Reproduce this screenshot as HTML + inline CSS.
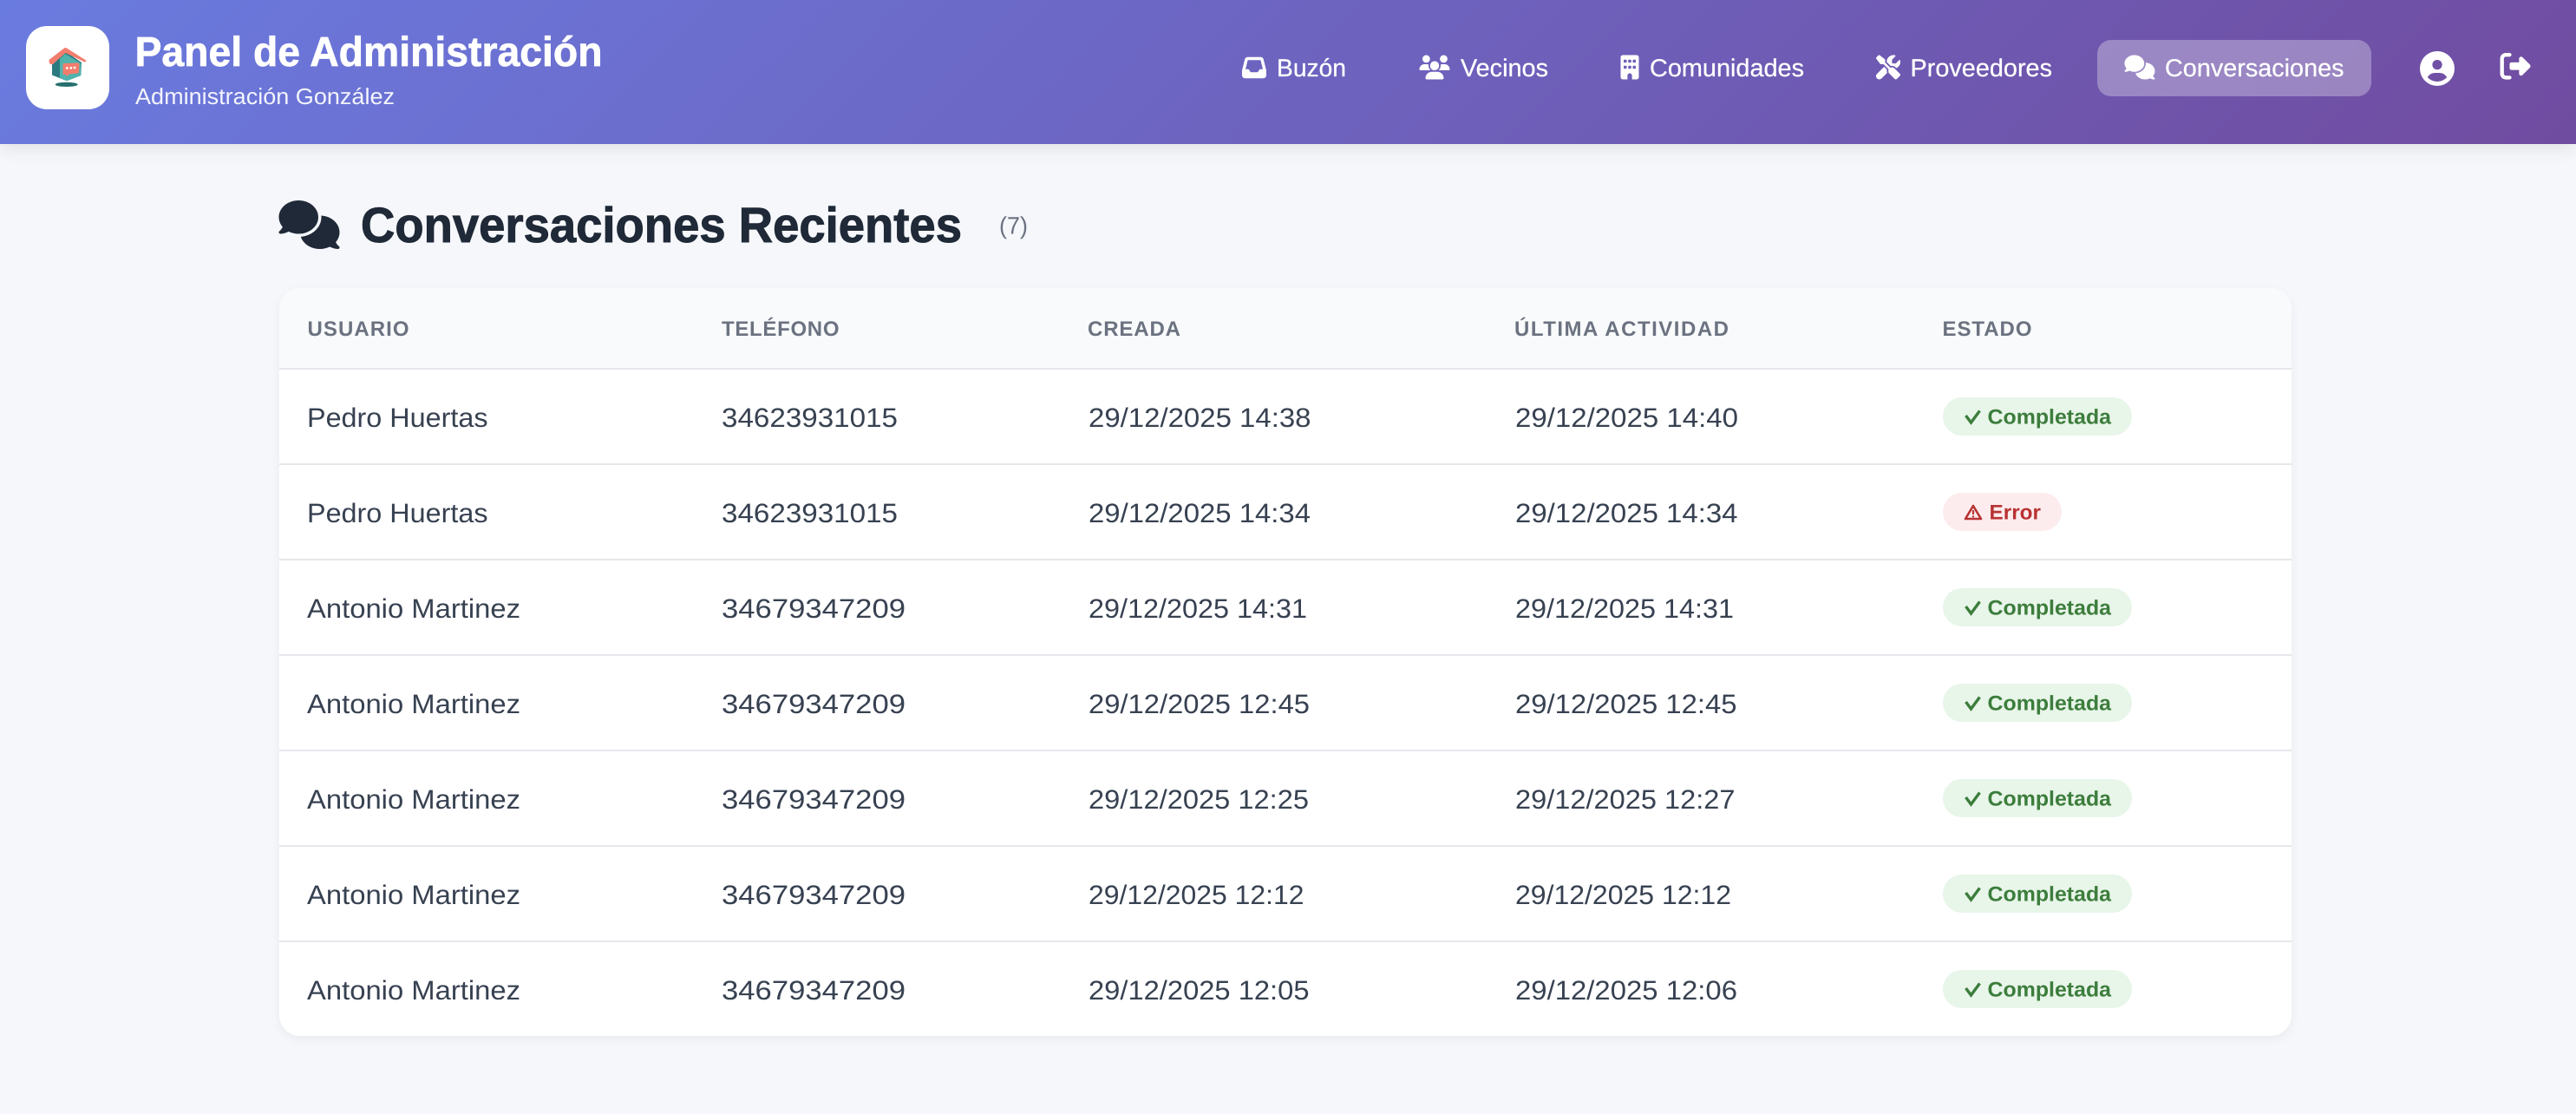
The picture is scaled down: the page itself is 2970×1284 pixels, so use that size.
<!DOCTYPE html>
<html lang="es">
<head>
<meta charset="utf-8">
<title>Panel de Administración</title>
<style>
html,body{margin:0;padding:0;width:2970px;height:1284px;overflow:hidden;background:#f5f7fb;}
#hdr{position:absolute;left:0;top:0;width:2970px;height:166px;background:linear-gradient(135deg,#6a7bdf 0%,#704ca0 100%);box-shadow:0 4px 20px rgba(0,0,0,.1);}
#logo{position:absolute;left:30px;top:30px;width:96px;height:96px;background:#fff;border-radius:24px;}
#pill{position:absolute;left:2418px;top:46px;width:316px;height:65px;border-radius:16px;background:rgba(255,255,255,.3);}
#card{position:absolute;left:322px;top:332px;width:2320px;height:862px;background:#fff;border-radius:24px;box-shadow:0 4px 12px rgba(0,0,0,.05);overflow:hidden;}
#thead{position:absolute;left:0;top:0;width:100%;height:92px;background:#f9fafb;border-bottom:2px solid #e5e7eb;}
.rl{position:absolute;left:0;width:100%;height:2px;background:#e5e7eb;}
svg#o{position:absolute;left:0;top:0;}
text{font-family:"Liberation Sans",Arial,sans-serif;text-rendering:geometricPrecision;}
.n{font-size:28.5px;fill:#fff;stroke:#fff;stroke-width:.25px;}
.h{font-size:24px;font-weight:700;fill:#6b7280;}
.c{font-size:31px;fill:#374151;}
.b{font-size:24px;font-weight:700;}
.g{fill:#3c7d3c;}
.r{fill:#b83232;}
</style>
</head>
<body>
<div id="hdr"><div id="logo"></div><div id="pill"></div></div>
<div id="card">
<div id="thead"></div>
<div class="rl" style="top:202px"></div>
<div class="rl" style="top:312px"></div>
<div class="rl" style="top:422px"></div>
<div class="rl" style="top:532px"></div>
<div class="rl" style="top:642px"></div>
<div class="rl" style="top:752px"></div>
</div>
<svg id="o" width="2970" height="1284" viewBox="0 0 2970 1284" xmlns="http://www.w3.org/2000/svg">
<defs>
<path id="comments" d="M208 352c114.9 0 208-78.8 208-176S322.9 0 208 0S0 78.8 0 176c0 38.6 14.7 74.3 39.6 103.4c-3.5 9.4-8.7 17.7-14.2 24.7c-4.8 6.2-9.7 11-13.3 14.3c-1.8 1.6-3.3 2.9-4.3 3.7c-.5 .4-.9 .7-1.1 .8l-.2 .2 0 0 0 0C1 327.2-1.4 334.4 .8 340.9S9.1 352 16 352c21.8 0 43.8-5.6 62.1-12.5c9.2-3.5 17.8-7.4 25.3-11.4C134.1 343.3 169.8 352 208 352zM448 176c0 112.3-99.1 196.9-216.5 207C255.8 457.4 336.4 512 432 512c38.2 0 73.9-8.7 104.7-23.9c7.5 4 16 7.9 25.2 11.4c18.3 6.9 40.3 12.5 62.1 12.5c6.9 0 13.1-4.5 15.2-11.1c2.1-6.6-.2-13.8-5.8-17.9l0 0 0 0-.2-.2c-.2-.2-.6-.4-1.1-.8c-1-.8-2.5-2-4.3-3.7c-3.6-3.3-8.5-8.1-13.3-14.3c-5.5-7-10.7-15.4-14.2-24.7c24.9-29 39.6-64.7 39.6-103.4c0-92.8-84.9-168.9-192.6-175.5c.4 5.1 .6 10.3 .6 15.5z"/>
<g id="ok"><rect width="218" height="44" rx="22" fill="#e8f5e9"/><path d="M26.500 21 L32.500 29 L42.500 15.500" fill="none" stroke="#3c7d3c" stroke-width="3.400"/></g>
</defs>

<!-- logo -->
<ellipse cx="76.700" cy="97.400" rx="13" ry="2.600" fill="#25706f"/>
<path d="M60 72 L75 59 L94 72 L93.300 87 L77 93.300 L60 86.500 Z" fill="#2c7a80"/>
<path d="M69 90 L69 68 L75 62 L93.300 73 L93.300 87 L77 93.300 Z" fill="#4fb3ac"/>
<path d="M56.500 69 L74 55.500 Q75.500 54.500 77 55.500 L99 69.500 Q100 71 97.500 71.500 L75.500 61 L61 74 Q56 75 56.500 69 Z" fill="#f27d6d"/>
<path d="M74 73 L90 72.500 Q91.500 72.500 91.500 74 L91 83 Q91 84.500 89.500 84.500 L80 85.500 L76.800 88 L76 86 L74 86 Q72.500 86 72.500 84.500 L72.500 74.500 Q72.500 73 74 73 Z" fill="#f27d6d"/>
<circle cx="77.300" cy="78.500" r="1.400" fill="#fff"/><circle cx="81.800" cy="78.300" r="1.400" fill="#fff"/><circle cx="86" cy="78" r="1.400" fill="#fff"/>

<!-- brand -->
<text x="155.500" y="76" font-size="48" font-weight="700" fill="#fff" stroke="#fff" stroke-width=".7" textLength="539" lengthAdjust="spacingAndGlyphs">Panel de Administración</text>
<text x="156" y="120" font-size="26" fill="#fff" fill-opacity=".92" textLength="299" lengthAdjust="spacingAndGlyphs">Administración González</text>

<!-- nav -->
<svg x="1432" y="64" width="28" height="28" viewBox="0 0 512 512" fill="#fff"><path d="M121 32C91.600 32 66 52 58.900 80.500L1.900 308.400C.6 313.500 0 318.700 0 323.900V416c0 35.300 28.700 64 64 64H448c35.300 0 64-28.700 64-64V323.900c0-5.200-.6-10.400-1.900-15.500l-57-227.900C446 52 420.400 32 391 32H121zm0 64H391l48 192H387.800c-12.100 0-23.200 6.800-28.600 17.700l-14.300 28.600c-5.400 10.800-16.500 17.700-28.600 17.700H195.800c-12.100 0-23.200-6.800-28.600-17.700l-14.300-28.600c-5.400-10.800-16.500-17.700-28.600-17.700H73L121 96z"/></svg>
<text class="n" x="1472" y="88" textLength="80" lengthAdjust="spacingAndGlyphs">Buzón</text>

<svg x="1636.500" y="63.500" width="35" height="28" viewBox="0 0 640 512" fill="#fff"><path d="M144 0a80 80 0 1 1 0 160A80 80 0 1 1 144 0zM512 0a80 80 0 1 1 0 160A80 80 0 1 1 512 0zM0 298.700C0 239.800 47.800 192 106.700 192h42.700c15.900 0 31 3.500 44.600 9.700c-1.300 7.200-1.900 14.700-1.900 22.300c0 38.200 16.800 72.500 43.300 96c-.2 0-.4 0-.7 0H21.300C9.600 320 0 310.400 0 298.700zM405.300 320c-.2 0-.4 0-.7 0c26.600-23.500 43.300-57.800 43.300-96c0-7.600-.7-15-1.900-22.300c13.600-6.300 28.700-9.700 44.600-9.700h42.700C592.200 192 640 239.800 640 298.700c0 11.800-9.600 21.300-21.300 21.300H405.300zM224 224a96 96 0 1 1 192 0 96 96 0 1 1 -192 0zM128 485.300C128 411.700 187.700 352 261.300 352H378.700C452.300 352 512 411.700 512 485.300c0 14.700-11.900 26.700-26.700 26.700H154.700c-14.700 0-26.700-11.900-26.700-26.700z"/></svg>
<text class="n" x="1684" y="88" textLength="101" lengthAdjust="spacingAndGlyphs">Vecinos</text>

<svg x="1868.500" y="63.500" width="21" height="28" viewBox="0 0 384 512" fill="#fff"><path d="M48 0C21.500 0 0 21.500 0 48V464c0 26.500 21.500 48 48 48h96V432c0-26.500 21.500-48 48-48s48 21.500 48 48v80h96c26.500 0 48-21.500 48-48V48c0-26.500-21.500-48-48-48H48zM64 240c0-8.800 7.200-16 16-16h32c8.800 0 16 7.200 16 16v32c0 8.800-7.200 16-16 16H80c-8.800 0-16-7.200-16-16V240zm112-16h32c8.800 0 16 7.200 16 16v32c0 8.800-7.200 16-16 16H176c-8.800 0-16-7.200-16-16V240c0-8.800 7.200-16 16-16zm80 16c0-8.800 7.200-16 16-16h32c8.800 0 16 7.200 16 16v32c0 8.800-7.200 16-16 16H272c-8.800 0-16-7.200-16-16V240zM80 96h32c8.800 0 16 7.200 16 16v32c0 8.800-7.200 16-16 16H80c-8.800 0-16-7.200-16-16V112c0-8.800 7.200-16 16-16zm80 16c0-8.800 7.200-16 16-16h32c8.800 0 16 7.200 16 16v32c0 8.800-7.200 16-16 16H176c-8.800 0-16-7.200-16-16V112zM272 96h32c8.800 0 16 7.200 16 16v32c0 8.800-7.200 16-16 16H272c-8.800 0-16-7.200-16-16V112c0-8.800 7.200-16 16-16z"/></svg>
<text class="n" x="1902" y="88" textLength="178" lengthAdjust="spacingAndGlyphs">Comunidades</text>

<svg x="2163" y="63.500" width="28" height="28" viewBox="0 0 512 512" fill="#fff"><path d="M78.600 5C69.100-2.400 55.600-1.500 47 7L7 47c-8.500 8.500-9.400 22-2.100 31.600l80 104c4.500 5.900 11.600 9.400 19 9.400h54.100l109 109c-14.700 29-10 65.400 14.300 89.600l112 112c12.500 12.500 32.800 12.500 45.300 0l64-64c12.500-12.500 12.500-32.800 0-45.300l-112-112c-24.200-24.200-60.600-29-89.600-14.300l-109-109V104c0-7.500-3.500-14.500-9.400-19L78.600 5zM19.900 396.100C7.200 408.800 0 426.100 0 444.100C0 481.600 30.400 512 67.900 512c18 0 35.300-7.200 48-19.900L233.700 374.300c-7.800-20.900-9-43.600-3.600-65.100l-61.700-61.700L19.900 396.100zM512 144c0-10.500-1.100-20.700-3.200-30.500c-2.400-11.200-16.100-14.100-24.200-6l-63.900 63.900c-3 3-7.100 4.700-11.300 4.700H352c-8.800 0-16-7.200-16-16V102.600c0-4.200 1.700-8.300 4.700-11.300l63.900-63.900c8.100-8.100 5.200-21.800-6-24.200C388.700 1.100 378.500 0 368 0C288.500 0 224 64.500 224 144l0 .8 85.300 85.300c36-9.100 75.800 .5 104 28.700L429 274.500c49-23 83-72.800 83-130.500z"/></svg>
<text class="n" x="2202.500" y="88" textLength="163.500" lengthAdjust="spacingAndGlyphs">Proveedores</text>

<svg x="2449.500" y="63.500" width="35" height="28" viewBox="0 0 640 512" fill="#fff"><use href="#comments"/></svg>
<text class="n" x="2496" y="88" textLength="206.500" lengthAdjust="spacingAndGlyphs">Conversaciones</text>

<svg x="2790" y="59" width="40" height="40" viewBox="0 0 512 512" fill="#fff"><path d="M399 384.200C376.900 345.800 335.400 320 288 320H224c-47.400 0-88.900 25.800-111 64.200c35.200 39.200 86.200 63.800 143 63.800s107.800-24.700 143-63.800zM0 256a256 256 0 1 1 512 0A256 256 0 1 1 0 256zm256 16a72 72 0 1 0 0-144 72 72 0 1 0 0 144z"/></svg>
<svg x="2882.500" y="58.800" width="35" height="35" viewBox="0 0 512 512" fill="#fff"><path d="M377.900 105.900L500.700 228.700c7.200 7.200 11.300 17.100 11.300 27.300s-4.100 20.100-11.300 27.300L377.900 406.100c-6.400 6.400-15 9.900-24 9.900c-18.700 0-33.900-15.200-33.900-33.900l0-62.100-128 0c-17.700 0-32-14.300-32-32l0-64c0-17.700 14.300-32 32-32l128 0 0-62.100c0-18.700 15.200-33.900 33.900-33.900c9 0 17.600 3.600 24 9.900zM160 96L96 96c-17.700 0-32 14.300-32 32l0 256c0 17.700 14.300 32 32 32l64 0c17.700 0 32 14.300 32 32s-14.300 32-32 32l-64 0c-53 0-96-43-96-96L0 128C0 75 43 32 96 32l64 0c17.700 0 32 14.300 32 32s-14.300 32-32 32z"/></svg>

<!-- heading -->
<svg x="321.500" y="231" width="70" height="56" viewBox="0 0 640 512" fill="#1f2937"><use href="#comments"/></svg>
<text x="416" y="279" font-size="57" font-weight="700" fill="#1f2937" stroke="#1f2937" stroke-width="1" textLength="693" lengthAdjust="spacingAndGlyphs">Conversaciones Recientes</text>
<text x="1152" y="269.500" font-size="28" fill="#6b7280" textLength="33" lengthAdjust="spacingAndGlyphs">(7)</text>

<!-- table head -->
<text class="h" x="354.500" y="387" textLength="117" lengthAdjust="spacing">USUARIO</text>
<text class="h" x="832" y="387" textLength="135.500" lengthAdjust="spacing">TELÉFONO</text>
<text class="h" x="1254" y="387" textLength="107" lengthAdjust="spacing">CREADA</text>
<text class="h" x="1746" y="387" textLength="247" lengthAdjust="spacing">ÚLTIMA ACTIVIDAD</text>
<text class="h" x="2239.500" y="387" textLength="103" lengthAdjust="spacing">ESTADO</text>

<!-- row 1 -->
<text class="c" x="354" y="492" textLength="208.500" lengthAdjust="spacingAndGlyphs">Pedro Huertas</text>
<text class="c" x="832" y="492" textLength="203" lengthAdjust="spacingAndGlyphs">34623931015</text>
<text class="c" x="1255" y="492" textLength="256.500" lengthAdjust="spacingAndGlyphs">29/12/2025 14:38</text>
<text class="c" x="1747" y="492" textLength="257" lengthAdjust="spacingAndGlyphs">29/12/2025 14:40</text>
<use href="#ok" x="2240" y="458"/>
<text class="b g" x="2291.500" y="488.500" textLength="142.500" lengthAdjust="spacingAndGlyphs">Completada</text>

<!-- row 2 -->
<text class="c" x="354" y="602" textLength="208.500" lengthAdjust="spacingAndGlyphs">Pedro Huertas</text>
<text class="c" x="832" y="602" textLength="203" lengthAdjust="spacingAndGlyphs">34623931015</text>
<text class="c" x="1255" y="602" textLength="256" lengthAdjust="spacingAndGlyphs">29/12/2025 14:34</text>
<text class="c" x="1747" y="602" textLength="256.500" lengthAdjust="spacingAndGlyphs">29/12/2025 14:34</text>
<rect x="2240" y="568" width="137" height="44" rx="22" fill="#fdecee"/>
<path d="M2275 583 L2284 598 L2266 598 Z" fill="none" stroke="#b83232" stroke-width="2.600" stroke-linejoin="round"/>
<path d="M2275 588 V593" stroke="#b83232" stroke-width="2.200"/><circle cx="2275" cy="595.300" r="1.200" fill="#b83232"/>
<text class="b r" x="2293.500" y="598.500" textLength="59.500" lengthAdjust="spacingAndGlyphs">Error</text>

<!-- row 3 -->
<text class="c" x="354" y="712" textLength="246" lengthAdjust="spacingAndGlyphs">Antonio Martinez</text>
<text class="c" x="832" y="712" textLength="212" lengthAdjust="spacingAndGlyphs">34679347209</text>
<text class="c" x="1255" y="712" textLength="252" lengthAdjust="spacingAndGlyphs">29/12/2025 14:31</text>
<text class="c" x="1747" y="712" textLength="252" lengthAdjust="spacingAndGlyphs">29/12/2025 14:31</text>
<use href="#ok" x="2240" y="678"/>
<text class="b g" x="2291.500" y="708.500" textLength="142.500" lengthAdjust="spacingAndGlyphs">Completada</text>

<!-- row 4 -->
<text class="c" x="354" y="822" textLength="246" lengthAdjust="spacingAndGlyphs">Antonio Martinez</text>
<text class="c" x="832" y="822" textLength="212" lengthAdjust="spacingAndGlyphs">34679347209</text>
<text class="c" x="1255" y="822" textLength="255" lengthAdjust="spacingAndGlyphs">29/12/2025 12:45</text>
<text class="c" x="1747" y="822" textLength="255.500" lengthAdjust="spacingAndGlyphs">29/12/2025 12:45</text>
<use href="#ok" x="2240" y="788"/>
<text class="b g" x="2291.500" y="818.500" textLength="142.500" lengthAdjust="spacingAndGlyphs">Completada</text>

<!-- row 5 -->
<text class="c" x="354" y="932" textLength="246" lengthAdjust="spacingAndGlyphs">Antonio Martinez</text>
<text class="c" x="832" y="932" textLength="212" lengthAdjust="spacingAndGlyphs">34679347209</text>
<text class="c" x="1255" y="932" textLength="254" lengthAdjust="spacingAndGlyphs">29/12/2025 12:25</text>
<text class="c" x="1747" y="932" textLength="253.500" lengthAdjust="spacingAndGlyphs">29/12/2025 12:27</text>
<use href="#ok" x="2240" y="898"/>
<text class="b g" x="2291.500" y="928.500" textLength="142.500" lengthAdjust="spacingAndGlyphs">Completada</text>

<!-- row 6 -->
<text class="c" x="354" y="1042" textLength="246" lengthAdjust="spacingAndGlyphs">Antonio Martinez</text>
<text class="c" x="832" y="1042" textLength="212" lengthAdjust="spacingAndGlyphs">34679347209</text>
<text class="c" x="1255" y="1042" textLength="248.500" lengthAdjust="spacingAndGlyphs">29/12/2025 12:12</text>
<text class="c" x="1747" y="1042" textLength="249" lengthAdjust="spacingAndGlyphs">29/12/2025 12:12</text>
<use href="#ok" x="2240" y="1008"/>
<text class="b g" x="2291.500" y="1038.500" textLength="142.500" lengthAdjust="spacingAndGlyphs">Completada</text>

<!-- row 7 -->
<text class="c" x="354" y="1152" textLength="246" lengthAdjust="spacingAndGlyphs">Antonio Martinez</text>
<text class="c" x="832" y="1152" textLength="212" lengthAdjust="spacingAndGlyphs">34679347209</text>
<text class="c" x="1255" y="1152" textLength="254.500" lengthAdjust="spacingAndGlyphs">29/12/2025 12:05</text>
<text class="c" x="1747" y="1152" textLength="256" lengthAdjust="spacingAndGlyphs">29/12/2025 12:06</text>
<use href="#ok" x="2240" y="1118"/>
<text class="b g" x="2291.500" y="1148.500" textLength="142.500" lengthAdjust="spacingAndGlyphs">Completada</text>
</svg>
</body>
</html>
